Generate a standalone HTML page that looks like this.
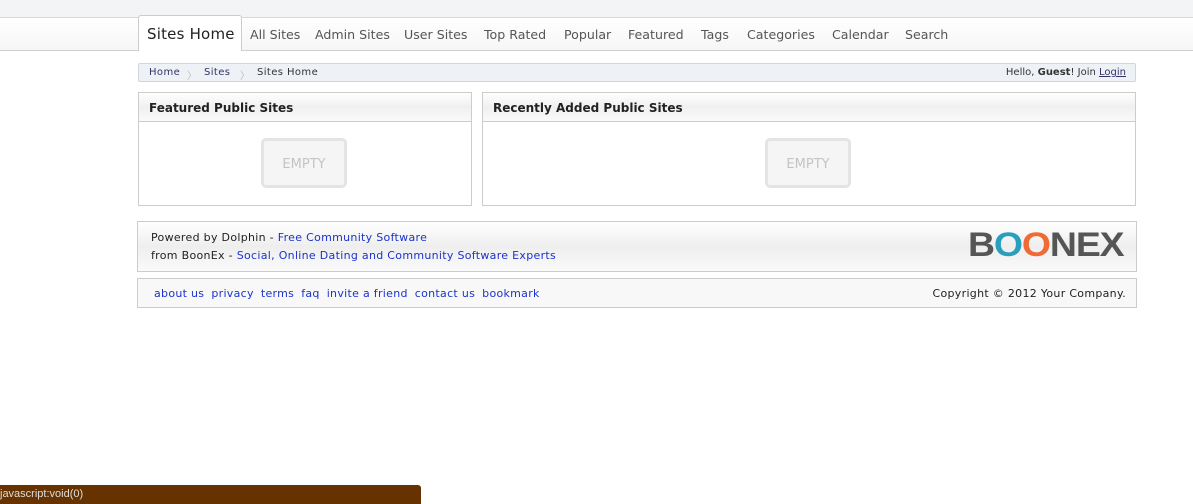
<!DOCTYPE html><html><head><style>
body{margin:0;width:1193px;height:504px;background:#fff;font-family:"DejaVu Sans",Verdana,sans-serif;position:relative;overflow:hidden}
.a{position:absolute;box-sizing:border-box}
.top{left:0;top:0;width:1193px;height:18px;background:#f3f4f5;border-bottom:1px solid #d8d8d8}
.nav{left:0;top:18px;width:1193px;height:33px;background:linear-gradient(#fff,#f6f6f6);border-bottom:1px solid #d0d0d0}
.tab{left:138px;top:15px;width:104px;height:36px;background:#fff;border:1px solid #ccc;border-bottom:none;border-radius:3px 3px 0 0;font-size:15px;color:#222;padding:9px 0 0 8px;letter-spacing:.2px}
.navi{top:27px;font-size:12.6px;color:#555}
.bc{left:138px;top:63px;width:998px;height:19px;border:1px solid #cfd6de;background:#eef2f6;border-radius:2px;font-size:10px;color:#333;letter-spacing:.4px}
.bc span{position:absolute;top:3px}
.box{border:1px solid #ccc;background:#fff}
.bh{position:absolute;left:0;top:0;right:0;height:29px;border-bottom:1px solid #ccc;background:linear-gradient(#fff 0%,#f0f0f0 50%,#fafafa 100%);font-size:12px;font-weight:bold;color:#222;padding:8px 0 0 10px;box-sizing:border-box}
.empty{position:absolute;width:86px;height:50px;border:3px solid #e4e4e4;border-radius:5px;background:#f5f5f5;color:#c4c4c4;font-size:13px;text-align:center;line-height:48px;box-sizing:border-box}
a{color:#1a33cc;text-decoration:none}
.fl a{margin-right:7px}
</style></head><body>
<div class="a top"></div><div class="a nav"></div>
<div class="a tab">Sites Home</div>
<div class="a navi" style="left:250px">All Sites</div>
<div class="a navi" style="left:315px">Admin Sites</div>
<div class="a navi" style="left:404px">User Sites</div>
<div class="a navi" style="left:484px">Top Rated</div>
<div class="a navi" style="left:564px">Popular</div>
<div class="a navi" style="left:628px">Featured</div>
<div class="a navi" style="left:701px">Tags</div>
<div class="a navi" style="left:747px">Categories</div>
<div class="a navi" style="left:832px">Calendar</div>
<div class="a navi" style="left:905px">Search</div>
<div class="a bc"><span style="left:10px;color:#336">Home</span><span style="left:48px;color:#bbb">〉</span><span style="left:65px;color:#336">Sites</span><span style="left:101px;color:#bbb">〉</span><span style="left:118px">Sites Home</span><span style="right:9px;letter-spacing:0">Hello, <b>Guest</b>! Join <u style="color:#336">Login</u></span></div>
<div class="a box" style="left:138px;top:92px;width:334px;height:114px"><div class="bh">Featured Public Sites</div><div class="empty" style="left:122px;top:45px">EMPTY</div></div>
<div class="a box" style="left:482px;top:92px;width:654px;height:114px"><div class="bh">Recently Added Public Sites</div><div class="empty" style="left:282px;top:45px">EMPTY</div></div>
<div class="a box" style="left:137px;top:221px;width:1000px;height:51px;background:linear-gradient(#fff,#eee 50%,#fafafa);font-size:11px;color:#222;letter-spacing:.3px">
<div style="position:absolute;left:13px;top:9px">Powered by Dolphin - <a>Free Community Software</a></div>
<div style="position:absolute;left:13px;top:27px">from BoonEx - <a>Social, Online Dating and Community Software Experts</a></div>
<div style="position:absolute;left:830px;top:4px;font:bold 34px 'Liberation Sans',sans-serif;color:#555;letter-spacing:-1px;transform:scaleX(1.1);transform-origin:left">B<span style="color:#2a9fbd">O</span><span style="color:#f06a35">O</span>NEX</div></div>
<div class="a box fl" style="left:137px;top:278px;width:1000px;height:30px;background:#f8f8f8;font-size:11px;letter-spacing:.3px">
<div style="position:absolute;left:16px;top:8px;white-space:nowrap"><a>about us</a><a>privacy</a><a>terms</a><a>faq</a><a>invite a friend</a><a>contact us</a><a>bookmark</a></div>
<div style="position:absolute;right:10px;top:8px;color:#222">Copyright © 2012 Your Company.</div></div>
<div class="a" style="left:0;top:485px;width:421px;height:19px;background:#663300;border-radius:0 3px 0 0;color:#ddd;font-size:11px;padding:3px 0 0 0;font-family:'Liberation Sans',sans-serif">javascript:void(0)</div>
</body></html>
